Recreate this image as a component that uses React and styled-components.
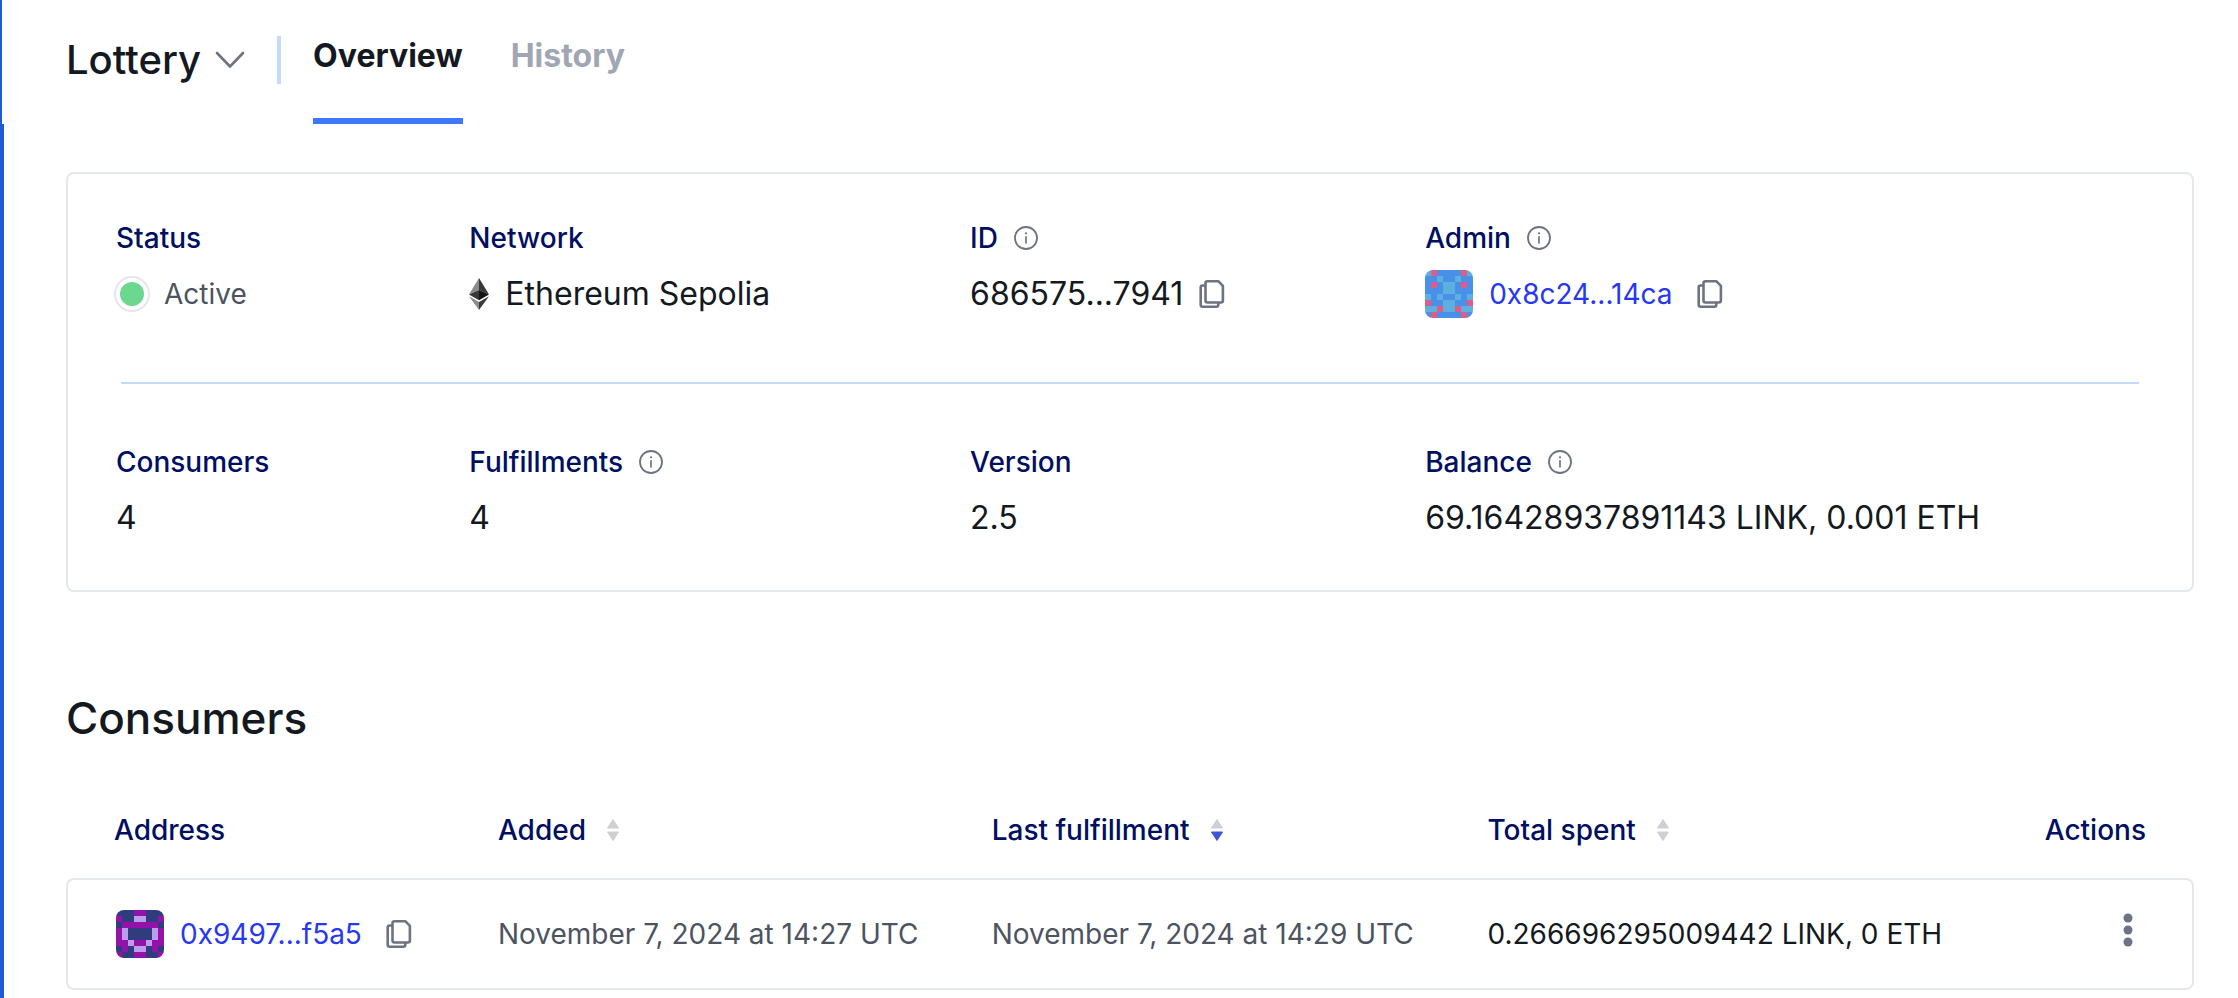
import React, { useState } from 'react'
import styled, { createGlobalStyle } from 'styled-components'

const BLUE_AVATAR = {
    colors: ['#4A90E8', '#5BB0DF', '#DF5C86'],
    cells: [
        '12000021',
        '00100100',
        '02011020',
        '00011000',
        '10100101',
        '20011002',
        '11211211',
        '02000020'
    ]
}

const PURPLE_AVATAR = {
    colors: ['#303C7E', '#9313AA', '#BE9CEC'],
    cells: [
        '00011000',
        '10022001',
        '01111110',
        '12000021',
        '12000021',
        '11211211',
        '01022010',
        '10011001'
    ]
}

const consumers = [
    {
        address: '0x9497...f5a5',
        avatar: PURPLE_AVATAR,
        added: 'November 7, 2024 at 14:27 UTC',
        lastFulfillment: 'November 7, 2024 at 14:29 UTC',
        totalSpent: '0.266696295009442 LINK, 0 ETH'
    }
]

const Avatar = ({ avatar }) => (
    <AvatarSvg viewBox="0 0 8 8" shapeRendering="crispEdges" aria-hidden="true">
        {avatar.cells.map((row, y) => row.split('').map((cell, x) => (
            <rect key={`${x}-${y}`} x={x} y={y} width="1" height="1" fill={avatar.colors[cell]} />
        )))}
    </AvatarSvg>
)

const CopyButton = ({ label }) => (
    <IconButton aria-label={label}>
        <svg width="26" height="30" viewBox="0 0 26 30" fill="none" stroke="#6D7380" strokeWidth="2.6" strokeLinejoin="round">
            <path d="M8.5 2.2h10.8l4.6 4.6v14.7a2 2 0 0 1-2 2H8.5a2 2 0 0 1-2-2V4.2a2 2 0 0 1 2-2z" />
            <path d="M6.5 6.5H3.7a2 2 0 0 0-2 2v17.3a2 2 0 0 0 2 2h13.6a2 2 0 0 0 2-2v-2.3" />
        </svg>
    </IconButton>
)

const InfoButton = ({ label }) => (
    <IconButton aria-label={label}>
        <svg width="24" height="24" viewBox="0 0 24 24" fill="none" stroke="#6D7380">
            <circle cx="12" cy="12" r="11" strokeWidth="1.8" />
            <path d="M12 10.2v7.3" strokeWidth="1.7" />
            <circle cx="12" cy="7.3" r="1.1" fill="#6D7380" stroke="none" />
        </svg>
    </IconButton>
)

const EthereumIcon = () => (
    <svg width="20" height="32" viewBox="0 0 20 32" aria-hidden="true">
        <path d="M10 0v12L0 16.4z" fill="#8A8A8A" />
        <path d="M10 0v12l10 4.4z" fill="#383838" />
        <path d="M0 16.4L10 12v10.2z" fill="#383838" />
        <path d="M20 16.4L10 12v10.2z" fill="#141414" />
        <path d="M0 18.3l10 5.8V32z" fill="#8A8A8A" />
        <path d="M20 18.3l-10 5.8V32z" fill="#3C3C3B" />
    </svg>
)

const SortIcon = ({ descending }) => (
    <svg width="14" height="24" viewBox="0 0 14 24" strokeWidth="1" strokeLinejoin="round" aria-hidden="true">
        <path d="M7 1.5l5.5 8.5h-11z" fill="#CFD0D6" stroke="#CFD0D6" />
        <path d="M7 22.5L1.5 14h11z" fill={descending ? '#3D56D6' : '#CFD0D6'} stroke={descending ? '#3D56D6' : '#CFD0D6'} />
    </svg>
)

const Field = ({ label, info, children }) => (
    <FieldWrapper>
        <FieldLabel>
            {label}
            {info && <InfoButton label={`About ${label}`} />}
        </FieldLabel>
        <FieldValue>{children}</FieldValue>
    </FieldWrapper>
)

export default function App() {
    const [tab, setTab] = useState('Overview')

    return (
        <Page>
            <GlobalStyle />
            <Header>
                <SubscriptionButton>
                    Lottery
                    <svg width="30" height="18" viewBox="0 0 30 18" fill="none" stroke="#6D7380" strokeWidth="2.6" strokeLinecap="round" strokeLinejoin="round" aria-hidden="true">
                        <path d="M2 2l13 13.5L28 2" />
                    </svg>
                </SubscriptionButton>
                <HeaderDivider />
                <Tabs>
                    {['Overview', 'History'].map((name) => (
                        <Tab key={name} $active={tab === name} onClick={() => setTab(name)}>{name}</Tab>
                    ))}
                </Tabs>
            </Header>
            <Main>
                <Card>
                    <Field label="Status">
                        <StatusDot />
                        <StatusText>Active</StatusText>
                    </Field>
                    <Field label="Network">
                        <EthereumIcon />
                        Ethereum Sepolia
                    </Field>
                    <Field label="ID" info>
                        686575...7941
                        <CopyButton label="Copy ID" />
                    </Field>
                    <Field label="Admin" info>
                        <Avatar avatar={BLUE_AVATAR} />
                        <AddressLink href="#admin">0x8c24...14ca</AddressLink>
                        <CopyButton label="Copy admin address" />
                    </Field>
                    <CardDivider />
                    <Field label="Consumers">4</Field>
                    <Field label="Fulfillments" info>4</Field>
                    <Field label="Version">2.5</Field>
                    <Field label="Balance" info>69.16428937891143 LINK, 0.001 ETH</Field>
                </Card>
                <SectionTitle>Consumers</SectionTitle>
                <Table>
                    <thead>
                        <tr>
                            <HeadCell $width="20.3%">Address</HeadCell>
                            <HeadCell $width="23.2%"><SortButton>Added<SortIcon /></SortButton></HeadCell>
                            <HeadCell $width="23.3%" aria-sort="descending"><SortButton>Last fulfillment<SortIcon descending /></SortButton></HeadCell>
                            <HeadCell $width="23.2%"><SortButton>Total spent<SortIcon /></SortButton></HeadCell>
                            <HeadCell $align="right">Actions</HeadCell>
                        </tr>
                    </thead>
                    <tbody>
                        {consumers.map((consumer) => (
                            <tr key={consumer.address}>
                                <Cell>
                                    <AddressWrapper>
                                        <Avatar avatar={consumer.avatar} />
                                        <AddressLink href="#consumer">{consumer.address}</AddressLink>
                                        <CopyButton label="Copy consumer address" />
                                    </AddressWrapper>
                                </Cell>
                                <Cell $muted>{consumer.added}</Cell>
                                <Cell $muted>{consumer.lastFulfillment}</Cell>
                                <Cell>{consumer.totalSpent}</Cell>
                                <Cell $align="right">
                                    <MenuButton aria-label="Actions">
                                        <svg width="36" height="44" viewBox="0 0 36 44" fill="#6D7380">
                                            <circle cx="18" cy="6" r="4.5" />
                                            <circle cx="18" cy="18" r="4.5" />
                                            <circle cx="18" cy="30" r="4.5" />
                                        </svg>
                                    </MenuButton>
                                </Cell>
                            </tr>
                        ))}
                    </tbody>
                </Table>
            </Main>
        </Page>
    )
}

const GlobalStyle = createGlobalStyle`
    body {
        margin: 0;
        background-color: white;
        color: #141921;
        font-family: 'Inter', sans-serif;
        font-size: 28px;
        line-height: 40px;
    }

    * {
        box-sizing: border-box;
    }

    button {
        padding: 0;
        border: none;
        background: none;
        color: inherit;
        font: inherit;
        cursor: pointer;
    }

    svg {
        display: block;
        flex-shrink: 0;
    }
`

const Page = styled.div`
    min-height: 100vh;
    display: flex;
    flex-direction: column;
`

const Header = styled.header`
    height: 124px;
    display: flex;
    align-items: flex-start;
    padding-left: 64px;
    border-left: 2px solid #1F5BD3;
`

const SubscriptionButton = styled.button`
    && {
        display: flex;
        align-items: center;
        gap: 14px;
        padding-top: 36px;
        font-size: 40px;
        font-weight: 500;
        line-height: 48px;
    }
`

const HeaderDivider = styled.div`
    width: 4px;
    height: 48px;
    margin: 36px 32px 0;
    background-color: #C3DAFB;
`

const Tabs = styled.nav`
    height: 100%;
    display: flex;
    gap: 48px;
`

const Tab = styled.button`
    && {
        height: 100%;
        display: flex;
        padding-top: 36px;
        border-bottom: 6px solid ${props => props.$active ? '#3F77FB' : 'transparent'};
        color: ${props => props.$active ? '#141921' : '#A0A6B4'};
        font-size: 32px;
        font-weight: 700;
        line-height: 40px;
    }
`

const Main = styled.main`
    flex: 1;
    padding: 48px 44px 8px 62px;
    border-left: 4px solid #1F5BD3;
`

const Card = styled.section`
    display: grid;
    grid-template-columns: auto auto auto auto;
    column-gap: 36px;
    padding: 44px 48px 48px;
    border: 2px solid #E4E7EC;
    border-radius: 8px;
`

const CardDivider = styled.hr`
    grid-column: 1 / -1;
    width: calc(100% - 10px);
    height: 2px;
    margin: 64px 5px 58px;
    border: none;
    background-color: #C3DAFB;
`

const FieldWrapper = styled.div`
    display: flex;
    flex-direction: column;
    gap: 12px;
`

const FieldLabel = styled.div`
    display: flex;
    align-items: center;
    gap: 16px;
    color: #000F62;
    font-weight: 500;
`

const FieldValue = styled.div`
    height: 48px;
    display: flex;
    align-items: center;
    gap: 16px;
    font-size: 32px;
    white-space: nowrap;
`

const StatusDot = styled.span`
    width: 36px;
    height: 36px;
    margin: 0 -2px;
    border: 2px solid #E4E7EC;
    border-radius: 50%;
    background: #6BD78F content-box;
    padding: 4px;
`

const StatusText = styled.span`
    color: #4D5361;
    font-size: 28px;
`

const AvatarSvg = styled.svg`
    width: 48px;
    height: 48px;
    border-radius: 8px;
`

const AddressLink = styled.a`
    margin-right: 8px;
    color: #2738F0;
    font-size: 28px;
    text-decoration: none;
`

const IconButton = styled.button`
    display: flex;
`

const SectionTitle = styled.h2`
    margin: 94px 0 60px;
    font-size: 44px;
    font-weight: 500;
    line-height: 64px;
`

const Table = styled.table`
    width: 100%;
    table-layout: fixed;
    border-spacing: 0;
    text-align: left;
`

const HeadCell = styled.th`
    width: ${props => props.$width || 'auto'};
    padding: 0 0 28px;
    color: #000F62;
    font-weight: 500;
    text-align: ${props => props.$align || 'left'};

    &:first-child {
        padding-left: 48px;
    }

    &:last-child {
        padding-right: 48px;
    }
`

const SortButton = styled.button`
    display: flex;
    align-items: center;
    gap: 20px;
`

const Cell = styled.td`
    height: 112px;
    padding: 0;
    border: solid #E4E7EC;
    border-width: 2px 0;
    color: ${props => props.$muted ? '#4D5361' : 'inherit'};
    text-align: ${props => props.$align || 'left'};
    white-space: nowrap;

    &:first-child {
        padding-left: 48px;
        border-left-width: 2px;
        border-radius: 8px 0 0 8px;
    }

    &:last-child {
        padding-right: 46px;
        border-right-width: 2px;
        border-radius: 0 8px 8px 0;
    }
`

const AddressWrapper = styled.div`
    display: flex;
    align-items: center;
    gap: 16px;
`

const MenuButton = styled.button`
    display: inline-flex;
    vertical-align: middle;
`
